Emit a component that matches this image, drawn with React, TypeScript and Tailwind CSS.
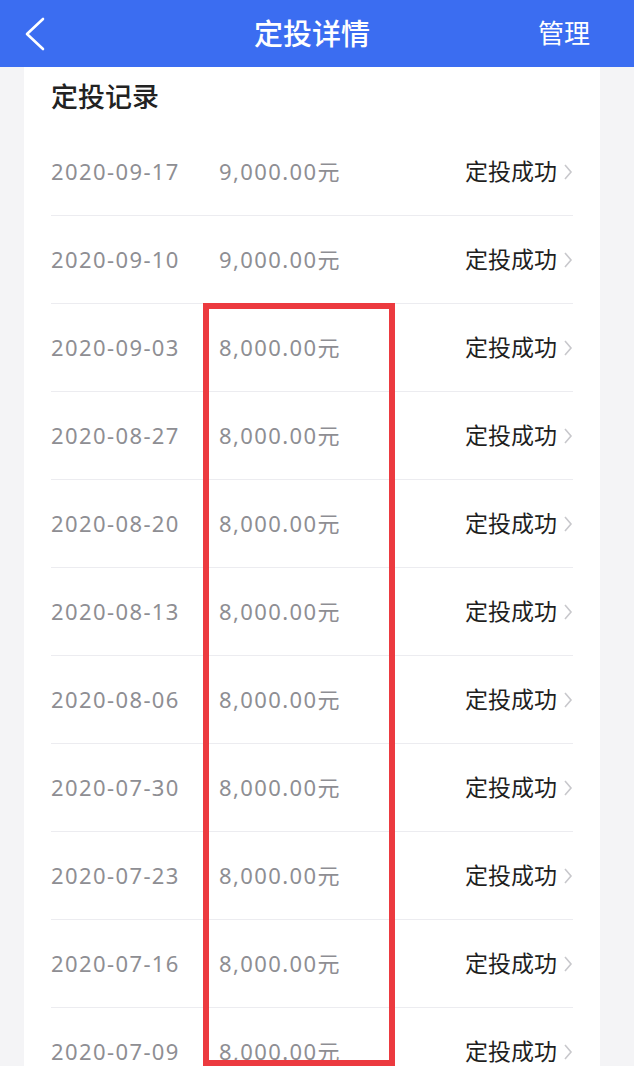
const records: { date: string; amount: string }[] = [
  { date: '2020-09-17', amount: '9,000.00' },
  { date: '2020-09-10', amount: '9,000.00' },
  { date: '2020-09-03', amount: '8,000.00' },
  { date: '2020-08-27', amount: '8,000.00' },
  { date: '2020-08-20', amount: '8,000.00' },
  { date: '2020-08-13', amount: '8,000.00' },
  { date: '2020-08-06', amount: '8,000.00' },
  { date: '2020-07-30', amount: '8,000.00' },
  { date: '2020-07-23', amount: '8,000.00' },
  { date: '2020-07-16', amount: '8,000.00' },
  { date: '2020-07-09', amount: '8,000.00' },
];

const font = "font-['Noto_Sans','Noto_Sans_CJK_SC',sans-serif]";

function Row({ date, amount }: { date: string; amount: string }) {
  return (
    <div className="flex h-[88px] items-center border-b border-[#ececf0]">
      <span className="w-[168px] shrink-0 text-[22px] tracking-[1.4px] text-[#8e8e93]">
        {date}
      </span>
      <span className="flex-1 text-[22px] tracking-[1.4px] text-[#8e8e93]">
        {amount}元
      </span>
      <span className="text-[23px] text-[#1f1f1f]">定投成功</span>
      <svg
        className="ml-[6px] h-[18px] w-[10px] shrink-0"
        viewBox="0 0 10 18"
        fill="none"
        stroke="#c8c8cc"
        strokeWidth="1.6"
      >
        <path d="M2 2l6 7-6 7" />
      </svg>
    </div>
  );
}

export default function App() {
  return (
    <div className={`relative h-[1066px] overflow-hidden bg-[#f4f4f6] ${font}`}>
      <header className="grid h-[67px] grid-cols-[1fr_auto_1fr] items-center bg-[#3b6df1] px-[24px] text-white">
        <svg
          className="h-[34px] w-[22px]"
          viewBox="0 0 22 34"
          fill="none"
          stroke="white"
          strokeWidth="2.6"
          strokeLinecap="round"
          strokeLinejoin="round"
        >
          <path d="M19 2L3 17l16 15" />
        </svg>
        <div className="pr-[10px] text-[29px] font-medium">定投详情</div>
        <div className="justify-self-end pr-[20px] text-[26px]">管理</div>
      </header>

      <div className="mx-[24px] w-[576px] bg-white pl-[27px] pr-[27px]">
        <div className="flex h-[61px] items-center text-[27px] font-medium text-[#222]">
          定投记录
        </div>
        {records.map((r) => (
          <Row key={r.date} date={r.date} amount={r.amount} />
        ))}
      </div>

      <div
        className="pointer-events-none absolute left-[203px] top-[303px] h-[763px] w-[192px] border-[6px] border-[#ec3a3f]"
        aria-hidden
      />
    </div>
  );
}
